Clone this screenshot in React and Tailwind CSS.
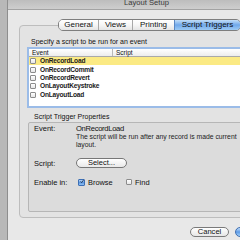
import React from "react";

const events = ["OnRecordLoad", "OnRecordCommit", "OnRecordRevert", "OnLayoutKeystroke", "OnLayoutLoad"];

const tabs = [
  { label: "General", w: "w-[39px]" },
  { label: "Views", w: "w-[34px]" },
  { label: "Printing", w: "w-[42px]" },
  { label: "Script Triggers", w: "w-[66px]", active: true },
];

function Box({ checked }) {
  if (checked) {
    return (
      <span className="w-[7px] h-[7px] shrink-0 rounded-[1px] border border-[#3d6fb5] bg-gradient-to-b from-[#b9d6f6] via-[#5e98e0] to-[#8fc0f2] flex items-center justify-center">
        <svg width="7" height="7" viewBox="0 0 7 7" className="-mt-[1px] ml-[1px]">
          <path d="M1 3.5 L2.8 5.6 L6.6 0.4" fill="none" stroke="#10223d" strokeWidth="1.3" />
        </svg>
      </span>
    );
  }
  return <span className="w-[6px] h-[6px] shrink-0 rounded-[1px] border border-[#8c8c8c] bg-gradient-to-b from-white to-[#e6e6e6]" />;
}

export default function App() {
  return (
    <div className="w-[240px] h-[240px] overflow-hidden flex bg-[#e8e8e8] font-['Liberation_Sans',Arial,sans-serif] text-[#111]">
      {/* edge of the window behind */}
      <div className="w-[8px] shrink-0 bg-[#b8b8b8] border-r border-[#8e8e8e]" />

      <div className="w-[277px] shrink-0 flex flex-col bg-[#e8e8e8]">
        {/* ===== TITLE BAR ===== */}
        <div className="h-[10px] shrink-0 bg-gradient-to-b from-[#bdbdbd] to-[#cecece] border-b border-[#a3a3a3] flex justify-center overflow-hidden">
          <span className="text-[7.6px] leading-[8px] -mt-[1px] text-[#3a3a3a]">Layout Setup</span>
        </div>

        <div className="pl-[11px] pr-[11px] pt-[9px]">
          {/* ===== TABS ===== */}
          <div className="relative z-10 ml-[39px] flex h-[12px] w-fit rounded-[5px] border border-[#7e7e7e] overflow-hidden">
            {tabs.map((t, i) => (
              <div
                key={t.label}
                className={
                  (t.active
                    ? "bg-gradient-to-b from-[#c3def8] via-[#70a8ea] to-[#9ccaf5] border-l border-[#5a88c4] "
                    : "bg-gradient-to-b from-white via-[#f6f6f6] to-[#e4e4e4] " + (i > 0 ? "border-l border-[#a8a8a8] " : "")) +
                  t.w +
                  " flex items-center justify-center text-[8px] leading-[10px] text-[#111]"
                }
              >
                {t.label}
              </div>
            ))}
          </div>

          {/* ===== TAB BOX ===== */}
          <div className="-mt-[6px] h-[193px] rounded-[4px] border border-[#bdbdbd] bg-[#e3e3e3] px-[7px] pt-[11px]">
            <p className="pl-[4px] text-[7px] leading-[9px]">Specify a script to be run for an event</p>

            {/* event table */}
            <div className="mt-[1px] h-[61px] border-2 border-[#9bbce8] bg-white">
              <div className="flex h-[8px] border-b border-[#a9a9a9] bg-gradient-to-b from-white to-[#ededed] text-[6.5px] leading-[7px]">
                <div className="w-[84px] pl-[3px] border-r border-[#b9b9b9]">Event</div>
                <div className="pl-[3px]">Script</div>
              </div>
              {events.map((e, i) => (
                <div
                  key={e}
                  className={(i === 0 ? "bg-[#fbea84] " : "") + "flex items-center h-[8.4px] pl-[1px] gap-[4px]"}
                >
                  <Box />
                  <span className="text-[6.6px] leading-[8px] font-bold tracking-[-0.2px] text-[#1a1a1a]">{e}</span>
                </div>
              ))}
            </div>

            <p className="mt-[4px] pl-[7px] text-[7px] leading-[9px]">Script Trigger Properties</p>

            {/* properties group */}
            <div className="ml-[1px] mt-[1px] h-[90px] rounded-[2px] border border-[#b6b6b6] bg-[#dcdcdc] pl-[5px] pt-[1px]">
              <div className="flex">
                <span className="w-[42px] text-[7.5px] leading-[9px]">Event:</span>
                <div>
                  <p className="text-[7.6px] leading-[9px] tracking-[-0.3px]">OnRecordLoad</p>
                  <p className="text-[6.8px] leading-[8px] text-[#222] whitespace-nowrap">
                    The script will be run after any record is made current
                  </p>
                  <p className="text-[6.8px] leading-[8px] text-[#222]">layout.</p>
                </div>
              </div>

              <div className="mt-[9px] flex items-center">
                <span className="w-[42px] text-[7.5px] leading-[9px]">Script:</span>
                <button className="w-[51px] h-[10px] rounded-full border border-[#777] bg-gradient-to-b from-white to-[#e9e9e9] text-[7.5px] leading-[8px] flex items-center justify-center">
                  Select...
                </button>
              </div>

              <div className="mt-[9px] flex items-center h-[10px]">
                <span className="w-[44px] text-[7.5px] leading-[9px]">Enable in:</span>
                <Box checked />
                <span className="ml-[3px] w-[38px] text-[7.4px] leading-[9px]">Browse</span>
                <Box />
                <span className="ml-[3px] text-[7.5px] leading-[9px]">Find</span>
              </div>
            </div>
          </div>
        </div>

        {/* ===== DIALOG BUTTONS ===== */}
        <div className="mt-[9px] pl-[182px] flex gap-[6px]">
          <button className="w-[39px] h-[10px] rounded-full border border-[#7a7a7a] bg-gradient-to-b from-white to-[#e6e6e6] text-[7.6px] leading-[8px] flex items-center justify-center">
            Cancel
          </button>
          <button className="w-[44px] h-[10px] rounded-full border border-[#3e6db0] bg-gradient-to-b from-[#c5e0fa] via-[#5c9ae6] to-[#a3d0f7] text-[7.6px] leading-[8px] flex items-center justify-center">
            OK
          </button>
        </div>
      </div>
    </div>
  );
}
